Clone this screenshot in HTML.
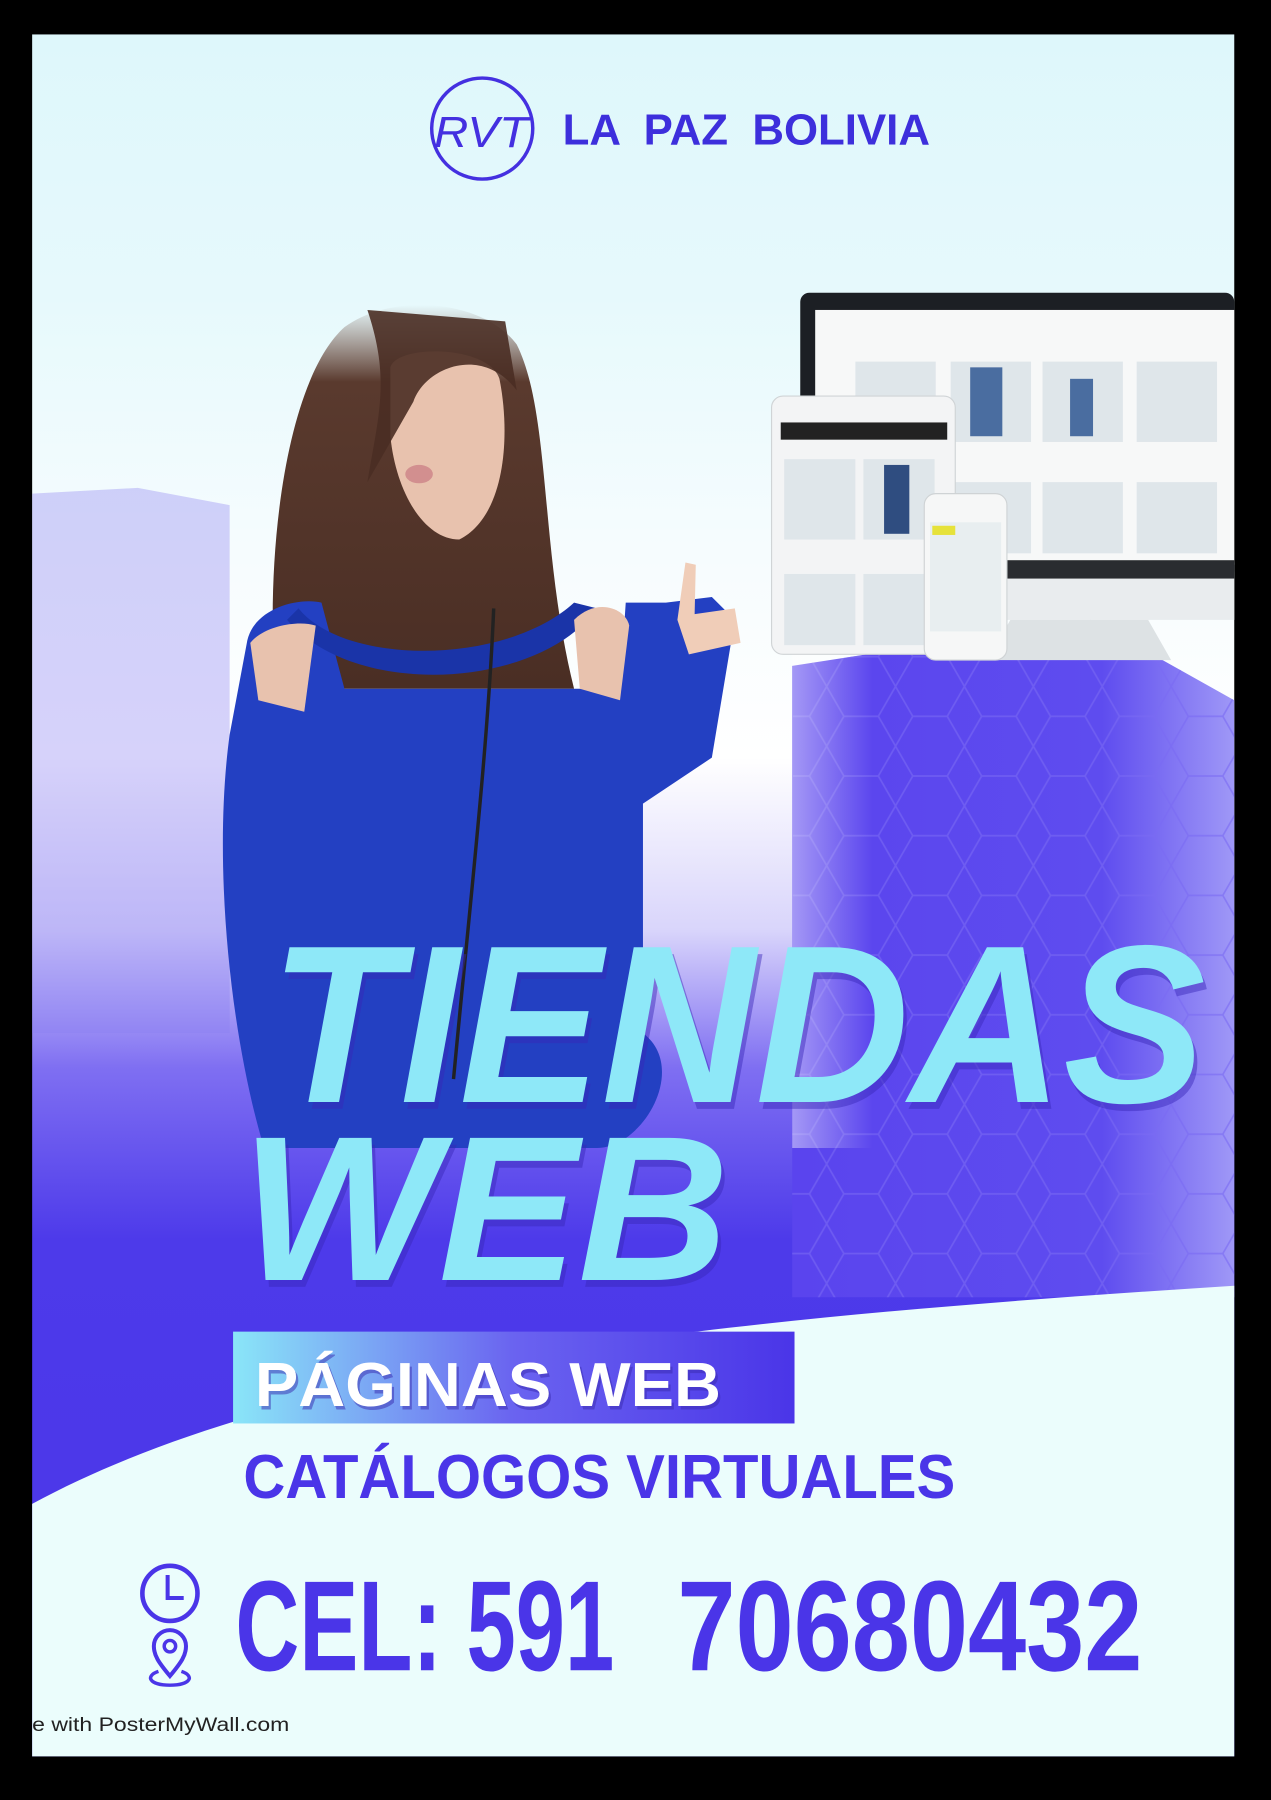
<!DOCTYPE html>
<html><head><meta charset="utf-8"><style>
html,body{margin:0;padding:0;background:#000;}
svg{display:block;}
text{font-family:"Liberation Sans",sans-serif;}
</style></head><body>
<svg width="1271" height="1800" viewBox="0 0 1107 1568" preserveAspectRatio="none" xmlns="http://www.w3.org/2000/svg">
<defs>
<linearGradient id="bg" x1="0" y1="0" x2="0" y2="1">
<stop offset="0" stop-color="#def7fb"/><stop offset="0.15" stop-color="#e6f9fc"/><stop offset="0.3" stop-color="#f6fcfe"/><stop offset="0.42" stop-color="#ffffff"/><stop offset="0.52" stop-color="#d9d5fb"/><stop offset="0.6" stop-color="#7f6ff2"/><stop offset="0.7" stop-color="#4d3aea"/><stop offset="1" stop-color="#4a35e8"/>
</linearGradient>
<linearGradient id="rt" x1="0" y1="0" x2="1" y2="0">
<stop offset="0" stop-color="#fff" stop-opacity="0.9"/><stop offset="1" stop-color="#fff" stop-opacity="0"/>
</linearGradient>
<linearGradient id="hex" x1="0" y1="0" x2="1" y2="0">
<stop offset="0" stop-color="#5a44ee"/><stop offset="0.7" stop-color="#5e4cef"/><stop offset="1" stop-color="#9f98f7"/>
</linearGradient>
<linearGradient id="pb" x1="0" y1="0" x2="1" y2="0">
<stop offset="0" stop-color="#8ae6f8"/><stop offset="0.5" stop-color="#6a63f0"/><stop offset="1" stop-color="#4a35e8"/>
</linearGradient>
<linearGradient id="hairfade" x1="0" y1="0" x2="0" y2="1">
<stop offset="0" stop-color="#6b4a3c" stop-opacity="0"/><stop offset="0.2" stop-color="#5a3a2e"/><stop offset="1" stop-color="#4a2e24"/>
</linearGradient>
<pattern id="hx" width="60" height="52" patternUnits="userSpaceOnUse">
<path d="M15 0 L45 0 L60 26 L45 52 L15 52 L0 26 Z" fill="none" stroke="#7a6af3" stroke-width="1.5"/>
</pattern>
</defs>
<rect x="0" y="0" width="1107" height="1568" fill="#000"/>
<rect x="28" y="30" width="1047" height="1500" fill="url(#bg)"/>
<path d="M28 430 L120 425 L200 440 L200 900 L28 900 Z" fill="#8a7ef2" opacity="0.35"/>
<path d="M690 580 L950 540 L1075 610 L1075 1130 L690 1130 Z" fill="url(#hex)"/>
<path d="M690 580 L950 540 L1075 610 L1075 1130 L690 1130 Z" fill="url(#hx)" opacity="0.6"/>
<path d="M690 560 L760 560 L760 1000 L690 1000 Z" fill="url(#rt)" opacity="0.5"/>
<g>
<rect x="697" y="255" width="378" height="250" rx="8" fill="#1c1f24"/>
<rect x="710" y="270" width="365" height="222" fill="#f7f8f8"/>
<rect x="710" y="490" width="365" height="50" fill="#e9ecee"/>
<rect x="710" y="488" width="365" height="16" fill="#2a2c30"/>
<path d="M880 540 L1000 540 L1020 575 L860 575 Z" fill="#dde2e4"/>
<g fill="#dfe6ea">
<rect x="745" y="315" width="70" height="70"/><rect x="828" y="315" width="70" height="70"/><rect x="908" y="315" width="70" height="70"/><rect x="990" y="315" width="70" height="70"/>
<rect x="828" y="420" width="70" height="62"/><rect x="908" y="420" width="70" height="62"/><rect x="990" y="420" width="70" height="62"/>
</g>
<g fill="#4a6da0"><rect x="845" y="320" width="28" height="60"/><rect x="932" y="330" width="20" height="50"/></g>
<rect x="672" y="345" width="160" height="225" rx="10" fill="#f3f4f5" stroke="#d0d4d6"/>
<rect x="680" y="368" width="145" height="15" fill="#222"/>
<g fill="#dfe6ea"><rect x="683" y="400" width="62" height="70"/><rect x="752" y="400" width="62" height="70"/><rect x="683" y="500" width="62" height="62"/><rect x="752" y="500" width="62" height="62"/></g>
<rect x="770" y="405" width="22" height="60" fill="#2f4d80"/>
<rect x="805" y="430" width="72" height="145" rx="10" fill="#f6f7f7" stroke="#cfd3d5"/>
<rect x="810" y="455" width="62" height="95" fill="#e8eef0"/>
<rect x="812" y="458" width="20" height="8" fill="#e6e23a"/>
</g>
<g>
<path d="M240 600 C230 480 250 330 300 285 C340 255 420 260 450 300 C480 360 470 480 500 600 Z" fill="url(#hairfade)"/>
<path d="M340 320 C345 300 425 300 435 330 C445 380 440 450 400 470 C370 470 345 430 340 380 Z" fill="#e8c2ae"/>
<path d="M320 270 C340 330 330 360 320 420 L360 350 C370 320 420 300 450 340 L440 280 Z" fill="#4a2e24" opacity="0.9"/>
<ellipse cx="365" cy="413" rx="12" ry="8" fill="#d28f8f"/>
<path d="M215 560 C220 530 260 520 280 525 L300 600 L540 600 L545 525 L580 525 L620 520 L640 540 L620 660 L560 700 L560 900 C600 930 560 1000 520 1000 L230 1000 C200 900 185 750 200 640 Z" fill="#2340c2"/>
<path d="M260 530 C300 580 440 580 500 525 L520 530 C470 600 310 610 250 540 Z" fill="#1a34a8"/>
<path d="M218 560 C230 545 260 540 275 545 L265 620 L225 610 Z" fill="#e8c2ae"/>
<path d="M500 540 C520 520 545 530 548 545 L540 610 L505 600 Z" fill="#e8c2ae"/>
<path d="M590 540 L597 490 L606 492 L605 535 L640 530 L645 560 L600 570 Z" fill="#f0cdb8"/>
<path d="M430 530 C425 650 410 780 395 940" stroke="#222" stroke-width="3" fill="none"/>
</g>
<path d="M28 1310 C250 1190 600 1150 1075 1120 L1075 1530 L28 1530 Z" fill="#ebfdfc"/>
<circle cx="420" cy="112" r="44" fill="none" stroke="#4430e0" stroke-width="3"/>
<text x="378" y="128" font-family="Liberation Serif" font-style="italic" font-size="38" fill="#4430e0" textLength="82" lengthAdjust="spacingAndGlyphs">RVT</text>
<text x="490" y="126" font-weight="bold" font-size="38" fill="#3d2fdc" textLength="320" lengthAdjust="spacingAndGlyphs" xml:space="preserve">LA  PAZ  BOLIVIA</text>
<text x="238" y="966" font-weight="bold" font-style="italic" font-size="196" fill="#3827b8" opacity="0.45" textLength="815" lengthAdjust="spacingAndGlyphs">TIENDAS</text>
<text x="235" y="960" font-weight="bold" font-style="italic" font-size="196" fill="#8ee8f8" textLength="815" lengthAdjust="spacingAndGlyphs">TIENDAS</text>
<text x="213" y="1121" font-weight="bold" font-style="italic" font-size="180" fill="#3827b8" opacity="0.45" textLength="425" lengthAdjust="spacingAndGlyphs">WEB</text>
<text x="210" y="1115" font-weight="bold" font-style="italic" font-size="180" fill="#8ee8f8" textLength="425" lengthAdjust="spacingAndGlyphs">WEB</text>
<rect x="203" y="1160" width="489" height="80" fill="url(#pb)"/>
<text x="224" y="1228" font-weight="bold" font-size="54" fill="#3a2bb0" opacity="0.5" textLength="406" lengthAdjust="spacingAndGlyphs">PÁGINAS WEB</text>
<text x="222" y="1225" font-weight="bold" font-size="54" fill="#ffffff" textLength="406" lengthAdjust="spacingAndGlyphs">PÁGINAS WEB</text>
<text x="212" y="1305" font-weight="bold" font-size="54" fill="#4a35e8" textLength="620" lengthAdjust="spacingAndGlyphs">CATÁLOGOS VIRTUALES</text>
<circle cx="148" cy="1388" r="24" fill="none" stroke="#4a35e8" stroke-width="4"/>
<path d="M146 1372 L146 1392 L160 1392" fill="none" stroke="#4a35e8" stroke-width="3.5"/>
<path d="M148 1460 C138 1448 134 1442 134 1434 A14 14 0 0 1 162 1434 C162 1442 158 1448 148 1460 Z" fill="none" stroke="#4a35e8" stroke-width="3.5"/>
<circle cx="148" cy="1434" r="5" fill="none" stroke="#4a35e8" stroke-width="3"/>
<path d="M138 1456 C126 1460 130 1468 148 1468 C166 1468 170 1460 158 1456" fill="none" stroke="#4a35e8" stroke-width="3"/>
<text x="205" y="1455" font-weight="bold" font-size="112" fill="#4a35e8" textLength="330" lengthAdjust="spacingAndGlyphs">CEL: 591</text>
<text x="590" y="1455" font-weight="bold" font-size="112" fill="#4a35e8" textLength="405" lengthAdjust="spacingAndGlyphs">70680432</text>
<text x="28" y="1508" font-size="17" fill="#222" textLength="224" lengthAdjust="spacingAndGlyphs">e with PosterMyWall.com</text>
</svg>
</body></html>
